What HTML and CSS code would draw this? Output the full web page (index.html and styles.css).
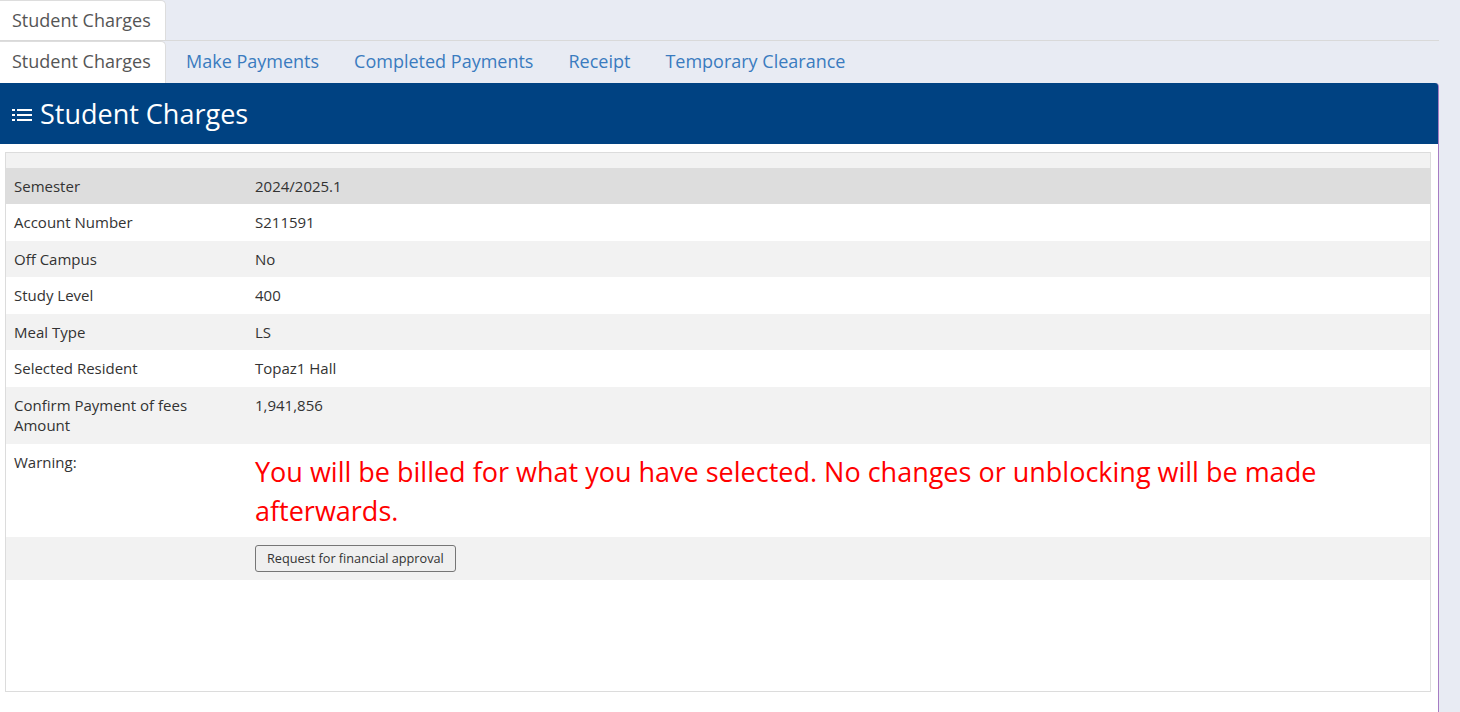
FILE: index.html
```html
<!DOCTYPE html>
<html>
<head>
<meta charset="utf-8">
<link rel="stylesheet" href="styles.css">
</head>
<body>
<div class="page">
  <div class="tabs top-tabs">
    <span class="tab active">Student Charges</span>
  </div>
  <div class="tabs sub-tabs">
    <span class="tab active">Student Charges</span>
    <a class="tab" href="#">Make Payments</a>
    <a class="tab" href="#">Completed Payments</a>
    <a class="tab" href="#">Receipt</a>
    <a class="tab" href="#">Temporary Clearance</a>
  </div>
  <div class="panel">
    <div class="panel-head">
      <svg class="list-icon" width="20" height="14" viewBox="0 0 20 14">
        <rect x="0" y="1" width="3" height="2" fill="#fff"/>
        <rect x="0" y="6" width="3" height="2" fill="#fff"/>
        <rect x="0" y="11" width="3" height="2" fill="#fff"/>
        <rect x="5" y="1" width="15" height="2" fill="#fff"/>
        <rect x="5" y="6" width="15" height="2" fill="#fff"/>
        <rect x="5" y="11" width="15" height="2" fill="#fff"/>
      </svg>
      <h1>Student Charges</h1>
    </div>
    <div class="panel-body">
      <div class="box">
        <div class="row spacer"></div>
        <div class="row dark"><div class="lbl">Semester</div><div class="val">2024/2025.1</div></div>
        <div class="row"><div class="lbl">Account Number</div><div class="val">S211591</div></div>
        <div class="row alt"><div class="lbl">Off Campus</div><div class="val">No</div></div>
        <div class="row"><div class="lbl">Study Level</div><div class="val">400</div></div>
        <div class="row alt"><div class="lbl">Meal Type</div><div class="val">LS</div></div>
        <div class="row"><div class="lbl">Selected Resident</div><div class="val">Topaz1 Hall</div></div>
        <div class="row alt"><div class="lbl">Confirm Payment of fees Amount</div><div class="val">1,941,856</div></div>
        <div class="row warn-row"><div class="lbl">Warning:</div><div class="val warning">You will be billed for what you have selected. No changes or unblocking will be made afterwards.</div></div>
        <div class="row alt btn-row"><div class="lbl"></div><div class="val"><button class="btn">Request for financial approval</button></div></div>
      </div>
    </div>
  </div>
</div>
</body>
</html>
```

FILE: styles.css
```css
html, body {
  margin: 0;
  padding: 0;
  background: #e8ebf3;
  font-family: "Open Sans", "Liberation Sans", sans-serif;
  color: #333;
}
.page {
  width: 1439px;
}
.tabs {
  display: flex;
  align-items: stretch;
}
.top-tabs {
  height: 40px;
  border-bottom: 1px solid #d9d9d9;
}
.sub-tabs {
  height: 42px;
}
.tab {
  display: flex;
  align-items: center;
  padding: 0 11px 3px;
  font-size: 18px;
  color: #3a7bbf;
  text-decoration: none;
  margin-right: 13px;
}
.top-tabs .tab {
  padding-bottom: 2px;
}
.tab.active {
  background: #fff;
  color: #555;
  border: 1px solid #ddd;
  border-left: none;
  border-bottom: none;
  border-top-right-radius: 5px;
  width: 141px;
  padding-left: 12px;
  padding-right: 12px;
  margin-right: 8px;
}
.sub-tabs .tab.active {
  margin-right: 9px;
}
.panel {
  border-right: 1px solid #a67cc4;
  border-top-right-radius: 4px;
}
.panel-head {
  background: #004282;
  height: 61px;
  display: flex;
  align-items: center;
  padding-left: 12px;
  border-top-right-radius: 3px;
}
.list-icon {
  margin-right: 8px;
  margin-top: 2px;
}
.panel-head h1 {
  margin: 0;
  font-size: 27px;
  font-weight: 400;
  color: #fff;
}
.panel-body {
  background: #fff;
  padding: 8px 7px 20px 5px;
  height: 540px;
}
.box {
  border: 1px solid #dcdcdc;
  height: 540px;
  box-sizing: border-box;
  font-size: 15px;
  line-height: 20.5px;
}
.row {
  display: flex;
  padding: 8px 0;
  min-height: 20px;
}
.row.spacer {
  min-height: 0;
  height: 14.5px;
  padding: 0;
  background: #f2f2f2;
}
.row.dark {
  background: #dddddd;
}
.row.alt {
  background: #f2f2f2;
}
.lbl {
  width: 249px;
  padding-left: 8px;
  box-sizing: border-box;
  padding-right: 45px;
}
.val {
  flex: 1;
}
.warn-row {
  padding-top: 8px;
  padding-bottom: 7px;
}
.warning {
  color: #ff0000;
  font-size: 27px;
  line-height: 39px;
  padding-right: 60px;
}
.btn-row {
  padding: 8px 0 8px;
}
.btn {
  font-family: "Open Sans", "Liberation Sans", sans-serif;
  font-size: 12.7px;
  color: #333;
  background: #efefef;
  border: 1px solid #767676;
  border-radius: 3px;
  padding: 3px 11px;
  line-height: 19px;
}
```
